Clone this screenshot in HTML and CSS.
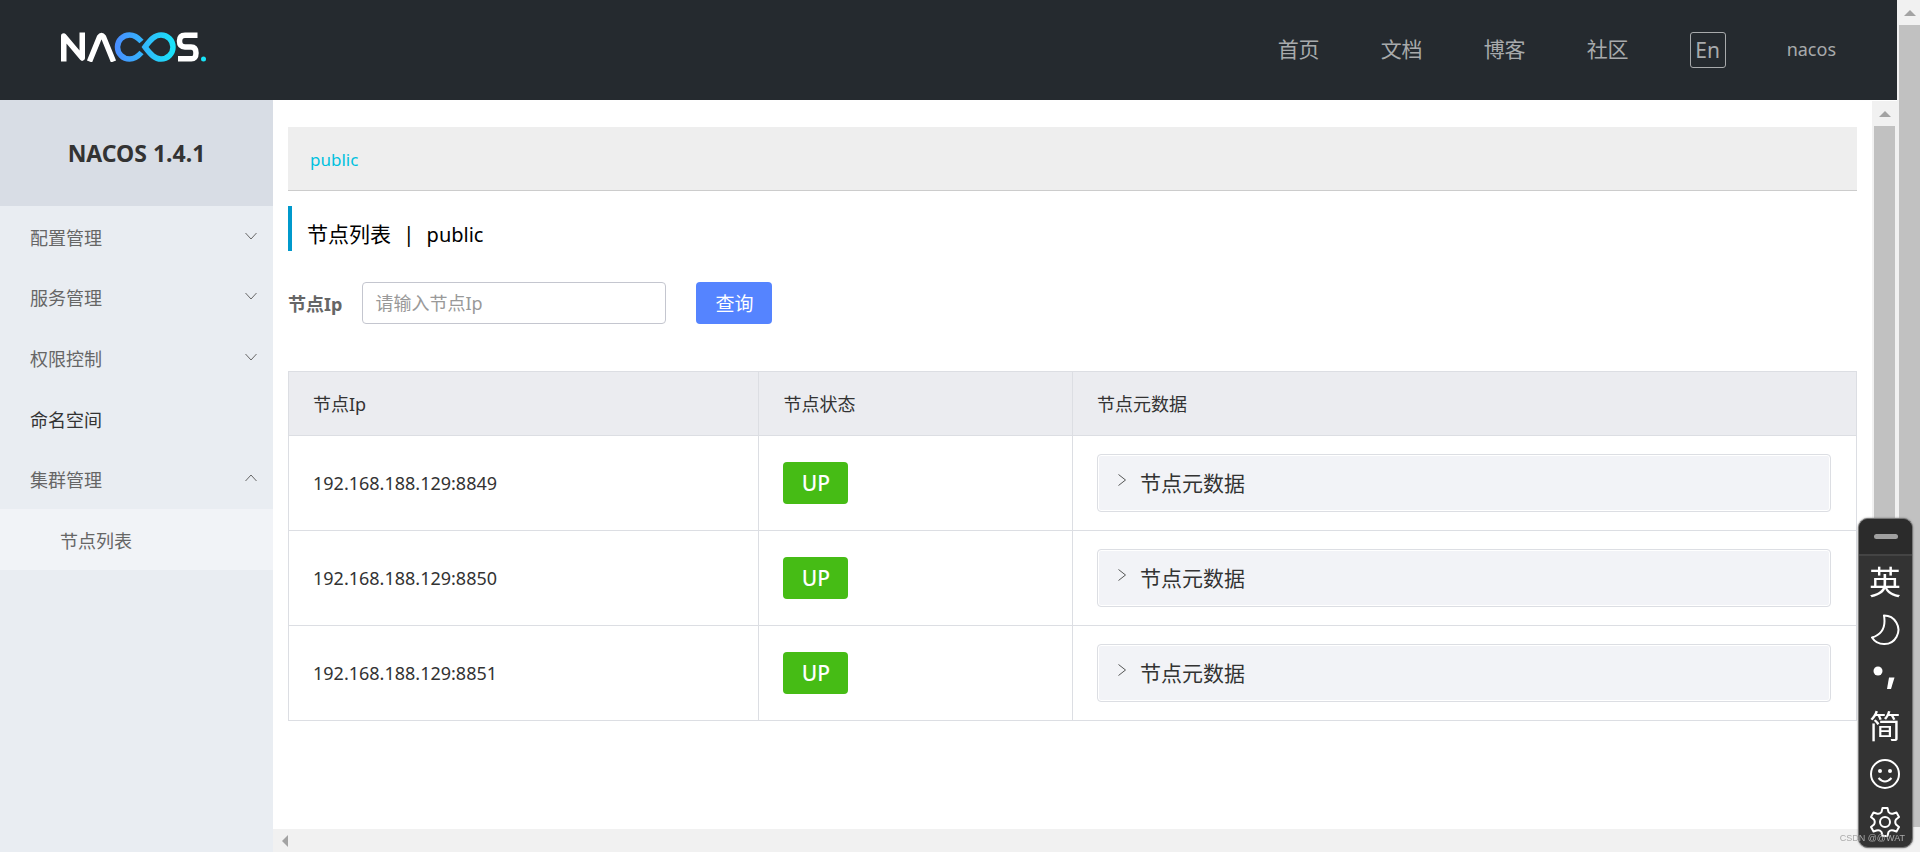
FILE: index.html
```html
<!DOCTYPE html>
<html lang="zh-CN">
<head>
<meta charset="utf-8">
<title>Nacos</title>
<link rel="stylesheet" href="styles.css">
</head>
<body>
<div class="page">
  <div class="app">
    <header class="topbar">
      <a class="logo" href="#" aria-label="Nacos">
        <svg width="146" height="30" viewBox="0 0 146 30">
          <defs>
            <linearGradient id="wave" gradientUnits="userSpaceOnUse" x1="54" y1="0" x2="114" y2="0">
              <stop offset="0" stop-color="#4a8cff"/>
              <stop offset="1" stop-color="#18e4f8"/>
            </linearGradient>
          </defs>
          <g fill="none" stroke="#fff" stroke-width="5.500" stroke-linejoin="round">
            <path d="M2.750 29.500V4L21.250 26V.5"/>
            <path d="M28.500 29.500L38.500 5Q40.500 2 42.500 5L52.500 29.500"/>
            <path d="M136.500 3.200H124Q118.500 3.200 118.500 9T124 15H130Q135 15 135 21T130 26.800H117"/>
          </g>
          <g fill="none" stroke="url(#wave)" stroke-width="5.500">
            <path d="M80.500 9.500C77 5.500 73 3 68.500 3A12 12 0 0 0 68.500 27C73 27 77 24.500 80.500 20.500"/>
            <path d="M84 15C90 7 94 3 100 3A12 12 0 0 1 100 27C94 27 90 23 84 15Z"/>
          </g>
          <circle cx="142.500" cy="27" r="2.500" fill="#18e4f8"/>
        </svg>
      </a>
      <nav class="topnav">
        <a href="#">首页</a>
        <a href="#">文档</a>
        <a href="#">博客</a>
        <a href="#">社区</a>
        <button class="lang" type="button">En</button>
        <a class="user" href="#">nacos</a>
      </nav>
    </header>
    <div class="body">
      <aside class="sidebar">
        <h1 class="version">NACOS 1.4.1</h1>
        <ul class="menu">
          <li><a href="#">配置管理<svg class="chev" viewBox="0 0 12 8"><path d="M.5 1L6 7L11.500 1"/></svg></a></li>
          <li><a href="#">服务管理<svg class="chev" viewBox="0 0 12 8"><path d="M.5 1L6 7L11.500 1"/></svg></a></li>
          <li><a href="#">权限控制<svg class="chev" viewBox="0 0 12 8"><path d="M.5 1L6 7L11.500 1"/></svg></a></li>
          <li><a class="plain" href="#">命名空间</a></li>
          <li><a href="#">集群管理<svg class="chev" viewBox="0 0 12 8"><path d="M.5 7L6 1L11.500 7"/></svg></a></li>
          <li><a class="sub" href="#">节点列表</a></li>
        </ul>
      </aside>
      <div class="pane">
        <div class="pane-row">
          <main class="content">
            <div class="namespaces"><a href="#">public</a></div>
            <h2 class="title"><span>节点列表</span><span>|</span><span class="ns">public</span></h2>
            <form class="search">
              <label for="ip">节点Ip</label>
              <input id="ip" type="text" placeholder="请输入节点Ip">
              <button class="query" type="button">查询</button>
            </form>
            <table class="nodes">
              <thead>
                <tr><th class="c-ip">节点Ip</th><th class="c-state">节点状态</th><th>节点元数据</th></tr>
              </thead>
              <tbody>
                <tr>
                  <td>192.168.188.129:8849</td>
                  <td><button class="up" type="button">UP</button></td>
                  <td><button class="meta" type="button"><svg class="arrow" viewBox="0 0 8 12"><path d="M.5 .5L7.500 6L.5 11.500"/></svg>节点元数据</button></td>
                </tr>
                <tr>
                  <td>192.168.188.129:8850</td>
                  <td><button class="up" type="button">UP</button></td>
                  <td><button class="meta" type="button"><svg class="arrow" viewBox="0 0 8 12"><path d="M.5 .5L7.500 6L.5 11.500"/></svg>节点元数据</button></td>
                </tr>
                <tr>
                  <td>192.168.188.129:8851</td>
                  <td><button class="up" type="button">UP</button></td>
                  <td><button class="meta" type="button"><svg class="arrow" viewBox="0 0 8 12"><path d="M.5 .5L7.500 6L.5 11.500"/></svg>节点元数据</button></td>
                </tr>
              </tbody>
            </table>
          </main>
          <div class="vbar inner"><span class="tri-up"></span><span class="thumb"></span></div>
        </div>
        <div class="hbar"><span class="tri-left"></span></div>
      </div>
    </div>
  </div>
  <div class="vbar outer"><span class="tri-up"></span><span class="thumb"></span></div>
</div>

<div class="ime">
  <div class="ime-grip"><span></span></div>
  <div class="ime-items">
    <button type="button">英</button>
    <button type="button" aria-label="半角"><svg width="30" height="32" viewBox="0 0 30 32"><path d="M14 1.500A14.300 14.300 0 1 1 2 23.500Q17 19 14 1.500Z"/></svg></button>
    <button type="button" aria-label="标点"><svg width="30" height="32" viewBox="0 0 30 32"><circle class="solid" cx="8" cy="9" r="4.500"/><path class="solid" d="M19 15.500H24.500L21 27H17Z"/></svg></button>
    <button type="button">简</button>
    <button type="button" aria-label="表情"><svg width="30" height="32" viewBox="0 0 30 32"><circle cx="15" cy="16" r="14"/><circle class="solid" cx="10" cy="13" r="2"/><circle class="solid" cx="20" cy="13" r="2"/><path d="M8.500 20Q15 27 21.500 20"/></svg></button>
    <button type="button" aria-label="设置"><svg width="30" height="32" viewBox="0 0 30 32"><path d="M12.500 2H17.500L18.500 6Q20.500 8.500 23.500 7.500L26.500 6.500L29 11L26 13.500Q24.500 16 26 18.500L29 21L26.500 25.500L23.500 24.500Q20.500 23.500 18.500 26L17.500 30H12.500L11.500 26Q9.500 23.500 6.500 24.500L3.500 25.500L1 21L4 18.500Q5.500 16 4 13.500L1 11L3.500 6.500L6.500 7.500Q9.500 8.500 11.500 6Z"/><circle cx="15" cy="16" r="5"/></svg></button>
  </div>
</div>
<div class="watermark">CSDN @@WAT</div>
</body>
</html>
```
FILE: styles.css
```css
* { box-sizing: border-box; }

body {
  margin: 0;
  font-family: "Noto Sans", "Noto Sans CJK SC", sans-serif;
  font-size: 18px;
  color: #333;
  background: #fff;
}

a { color: inherit; text-decoration: none; }

button, input { font: inherit; }

.page { display: flex; min-height: 100vh; }

.app { flex: 1; display: flex; flex-direction: column; min-width: 0; }

.topbar {
  display: flex;
  align-items: center;
  justify-content: space-between;
  height: 100px;
  padding: 0 61px;
  background: #252a2f;
}

.logo { display: flex; padding-bottom: 6px; }

.topnav {
  display: flex;
  align-items: center;
  gap: 61px;
  font-size: 21px;
  color: #a8aaac;
}

.topnav a { padding-bottom: 4px; }

.topnav .user { padding-bottom: 2px; font-size: 18px; }

.lang {
  width: 36px;
  height: 36px;
  padding: 0;
  line-height: 30px;
  color: inherit;
  background: none;
  border: 1px solid #a8aaac;
  border-radius: 3px;
}

.body { flex: 1; display: flex; }

.sidebar { width: 273px; background: #e9edf2; }

.version {
  margin: 0;
  height: 106px;
  line-height: 106px;
  font-size: 23px;
  text-align: center;
  background: #d8dde5;
}

.menu {
  display: grid;
  grid-auto-rows: 1fr;
  min-height: 364px;
  margin: 0;
  padding: 0;
  list-style: none;
  color: #666;
}

.menu a {
  display: flex;
  align-items: center;
  justify-content: space-between;
  height: 100%;
  padding: 1px 16px 0 30px;
}

.menu .plain { color: #333; }

.menu .sub { padding-left: 60px; background: #f1f3f7; }

.chev { width: 12px; height: 8px; margin-bottom: 2px; fill: none; stroke: #666; stroke-width: 1; }

.pane { flex: 1; display: flex; flex-direction: column; min-width: 0; padding-top: 1px; }

.pane-row { flex: 1; display: flex; }

.content { flex: 1; padding: 26px 15px 0; }

.namespaces {
  padding: 0 22px;
  height: 64px;
  line-height: 66px;
  font-size: 17px;
  color: #00c1de;
  background: #eee;
  border-bottom: 1px solid #ccc;
}

.title {
  display: flex;
  gap: 12px;
  margin: 15px 0 31px;
  padding: 6px 0 0 15px;
  height: 45px;
  line-height: 45px;
  font-size: 21px;
  font-weight: 400;
  color: #000;
  border-left: 4px solid #09c;
}

.title .ns { font-size: 20px; }

.search { display: flex; align-items: center; margin-bottom: 47px; }

.search label { font-weight: 700; color: #666; }

.search input {
  width: 304px;
  height: 42px;
  margin: 0 30px 0 20px;
  padding: 0 12px;
  color: #333;
  border: 1px solid #c4c6cf;
  border-radius: 4px;
}

.search input::placeholder { color: #999; }

.query {
  width: 76px;
  height: 42px;
  padding: 0;
  font-size: 19px;
  color: #fff;
  background: #5584ff;
  border: 0;
  border-radius: 4px;
}

.nodes { width: 100%; table-layout: fixed; border-collapse: collapse; }

.nodes th, .nodes td { padding: 0 25px 0 24px; text-align: left; border: 1px solid #dcdee3; }

.nodes th { height: 64px; padding-bottom: 2px; font-weight: 400; background: #ebecf0; }

.nodes td { height: 95px; }

.c-ip { width: 30%; }

.c-state { width: 20%; }

.up {
  display: block;
  width: 65px;
  height: 42px;
  padding: 0;
  font-size: 21px;
  font-weight: 500;
  color: #fff;
  background: #46bc15;
  border: 0;
  border-radius: 4px;
}

.meta {
  display: flex;
  align-items: center;
  gap: 14px;
  width: 100%;
  height: 58px;
  padding: 0 20px 2px;
  font-size: 21px;
  color: #333;
  background: #f2f3f7;
  border: 1px solid #dcdee3;
  border-radius: 4px;
  box-shadow: inset 0 0 0 1px #fff;
}

.arrow { width: 8px; height: 12px; margin-bottom: 4px; fill: none; stroke: #555; }

.vbar {
  display: flex;
  flex-direction: column;
  align-items: center;
  background: #f1f1f1;
}

.inner { width: 25px; padding: 10px 2px 0; gap: 9px; }

.outer { width: 23px; padding: 10px 0 25px 2px; gap: 9px; }

.thumb { flex: 1; width: 100%; background: #c1c1c1; }

.tri-up {
  border: 6px solid transparent;
  border-top: 0;
  border-bottom-color: #a3a3a3;
}

.hbar { display: flex; align-items: center; height: 23px; padding-left: 9px; background: #f1f1f1; }

.tri-left {
  border: 6px solid transparent;
  border-left: 0;
  border-right-color: #a3a3a3;
}

.ime {
  position: fixed;
  right: 7px;
  bottom: 4px;
  width: 55px;
  color: #fff;
  background: #333;
  border: 1px solid #777;
  border-radius: 10px;
  overflow: hidden;
  box-shadow: 0 0 2px #777;
}

.ime-grip {
  display: flex;
  align-items: center;
  justify-content: center;
  height: 37px;
  background: #2b2b2b;
  border-bottom: 2px solid #444;
}

.ime-grip span { width: 24px; height: 5px; background: #a0a0a0; border-radius: 3px; }

.ime-items { display: flex; flex-direction: column; padding: 3px 0 0; }

.ime-items button {
  display: flex;
  align-items: center;
  justify-content: center;
  height: 48px;
  padding: 0 1px 2px 0;
  font-size: 32px;
  line-height: 46px;
  color: inherit;
  background: none;
  border: 0;
}

.ime svg { margin-bottom: 1px; fill: none; stroke: #fff; stroke-width: 2; stroke-linejoin: round; }

.ime .solid { fill: #fff; stroke: none; }

.watermark {
  position: fixed;
  right: 15px;
  bottom: 6px;
  font: 9px/15px "Liberation Sans", sans-serif;
  color: #aaa;
}
```
